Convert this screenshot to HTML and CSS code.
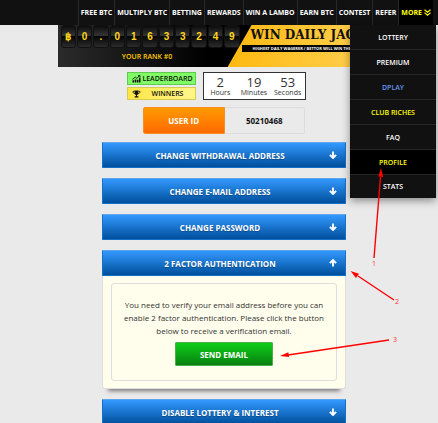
FILE: index.html
```html
<!DOCTYPE html>
<html lang="en">
<head>
<meta charset="utf-8">
<title>Profile</title>
<link rel="stylesheet" href="styles.css">
</head>
<body>
<svg class="defs" aria-hidden="true">
  <symbol id="arrow-down" viewBox="0 0 8 8"><path d="M4 .4V7M.9 3.8L4 7l3.1-3.2" fill="none" stroke="#fff" stroke-width="1.9"/></symbol>
  <symbol id="arrow-up" viewBox="0 0 8 8"><path d="M4 7.6V1M.9 4.2L4 1l3.1 3.2" fill="none" stroke="#fff" stroke-width="1.9"/></symbol>
</svg>
<header class="topbar">
  <nav class="nav">
    <a href="#">FREE BTC</a>
    <a href="#">MULTIPLY BTC</a>
    <a href="#">BETTING</a>
    <a href="#">REWARDS</a>
    <a href="#">WIN A LAMBO</a>
    <a href="#">EARN BTC</a>
    <a href="#">CONTEST</a>
    <a href="#">REFER</a>
    <a href="#" class="more">MORE
      <svg class="chevrons" viewBox="0 0 7 7" aria-hidden="true"><path d="M.5.8l3 2.5 3-2.5M.5 3.6l3 2.5 3-2.5" fill="none" stroke="#ff0" stroke-width="1.2"/></svg>
    </a>
  </nav>
  <nav class="menu">
    <a href="#">LOTTERY</a>
    <a href="#">PREMIUM</a>
    <a href="#" class="blue">DPLAY</a>
    <a href="#" class="yellow">CLUB RICHES</a>
    <a href="#">FAQ</a>
    <a href="#" class="yellow current">PROFILE</a>
    <a href="#">STATS</a>
  </nav>
</header>
<main class="page">
  <section class="banner">
    <div class="jackpot">
      <div class="digits"><span>฿</span><span>0</span><span>.</span><span>0</span><span>1</span><span>6</span><span>3</span><span>3</span><span>2</span><span>4</span><span>9</span></div>
      <div class="rank">YOUR RANK #0</div>
    </div>
    <div class="promo">
      <div class="promo-title">WIN DAILY JACKPOT</div>
      <div class="promo-sub">HIGHEST DAILY WAGERER / BETTOR WILL WIN THE JACKPOT</div>
    </div>
  </section>
  <section class="status">
    <div class="badges">
      <a href="#" class="badge green">
        <svg viewBox="0 0 9 8" aria-hidden="true"><path d="M.5 7.500V5.200h1.600v2.300zM2.700 7.500V4.400h1.600v3.100zM4.900 7.500V4.800h1.600v2.700zM7 7.500V2.800h1.500v4.700z"/><path d="M.4 4.300l3-2.200 1.400 1.200L7.600.8M6 .6h2v1.800" fill="none" stroke="#111" stroke-width=".9"/></svg>
        <span>LEADERBOARD</span></a>
      <a href="#" class="badge gold">
        <svg viewBox="0 0 9 8" aria-hidden="true"><path d="M2.600.5h3.800v2.300c0 1.300-.6 2-1.400 2.300v1.200h1.400v1.200H2.600V6.300H4V5.100c-.8-.3-1.400-1-1.400-2.300z"/><path d="M2.600 1.300H1c0 1.600.6 2.300 2 2.500M6.400 1.300H8c0 1.600-.6 2.300-2 2.500" fill="none" stroke="#111" stroke-width=".8"/></svg>
        <span>WINNERS</span></a>
    </div>
    <div class="countdown">
      <div><b>2</b><span>Hours</span></div>
      <div><b>19</b><span>Minutes</span></div>
      <div><b>53</b><span>Seconds</span></div>
    </div>
  </section>
  <section class="user"><div class="user-label">USER ID</div><div class="user-value">50210468</div></section>
  <section class="settings">
    <button class="bar" type="button"><span>CHANGE WITHDRAWAL ADDRESS</span><svg><use href="#arrow-down"/></svg></button>
    <button class="bar" type="button"><span>CHANGE E-MAIL ADDRESS</span><svg><use href="#arrow-down"/></svg></button>
    <button class="bar" type="button"><span>CHANGE PASSWORD</span><svg><use href="#arrow-down"/></svg></button>
    <div class="open">
      <button class="bar" type="button" aria-expanded="true"><span>2 FACTOR AUTHENTICATION</span><svg><use href="#arrow-up"/></svg></button>
      <div class="panel">
        <div class="box">
          <p>You need to verify your email address before you can<br>enable 2 factor authentication. Please click the button<br>below to receive a verification email.</p>
          <button class="send" type="button">SEND EMAIL</button>
        </div>
      </div>
    </div>
    <button class="bar" type="button"><span>DISABLE LOTTERY &amp; INTEREST</span><svg><use href="#arrow-down"/></svg></button>
  </section>
</main>
<svg class="notes" viewBox="0 0 438 423">
  <g stroke="#f00" stroke-width="1.4">
    <path d="M374 258L380.500 177"/>
    <path d="M394 300L358 276"/>
    <path d="M389 340L288 355"/>
  </g>
  <g fill="#f00">
    <path d="M381 168l2.300 9-5-.4z"/>
    <path d="M350.500 271l8.500 2.700-3 4.200z"/>
    <path d="M280 356l8.300-3.700.7 4.700z"/>
  </g>
  <g class="note-text">
    <text x="372" y="266">1</text>
    <text x="395" y="304">2</text>
    <text x="393" y="342">3</text>
  </g>
</svg>
</body>
</html>
```
FILE: styles.css
```css
* { box-sizing: border-box; }
body {
  margin: 0;
  height: 100vh;
  overflow: hidden;
  position: relative;
  background: #eaeaea;
  font-family: "Open Sans", "Noto Sans", sans-serif;
  font-size: 8px;
  color: #333;
}
a { text-decoration: none; color: inherit; }
button { font: inherit; border: 0; padding: 0; color: #fff; }
.defs { display: none; }

.topbar { position: relative; z-index: 2; background: #111; }
.nav { display: flex; justify-content: flex-end; padding-right: 5px; height: 25px; }
.nav a {
  display: flex;
  align-items: center;
  padding: 0 2px;
  border-left: 1px solid #292929;
  color: #fff;
  font-size: 7px;
  font-weight: 700;
  white-space: nowrap;
}
.nav .more { background: #000; color: #ff0; gap: 2px; }
.chevrons { width: 7px; height: 7px; }
.menu {
  position: absolute;
  top: 25px;
  right: 2px;
  width: 86px;
  background: #111;
  box-shadow: 0 3px 8px rgba(0, 0, 0, .4);
}
.menu a {
  display: flex;
  align-items: center;
  justify-content: center;
  height: 25px;
  border-bottom: 1px solid #262626;
  color: #fff;
  font-size: 7px;
  font-weight: 600;
}
.menu a:last-child { border-bottom: 0; height: 23px; }
.menu .blue { color: #6495ed; }
.menu .yellow { color: #ff0; }
.menu .current { background: #000; }

.page { width: 76%; margin: 0 auto; position: relative; z-index: 0; left: 5px; }
.banner { display: flex; height: 42px; background: linear-gradient(90deg, #2b2b2b, #000 45%); overflow: hidden; }
.jackpot { flex: 0 0 182px; padding-left: 3px; }
.digits { display: grid; grid-template-columns: repeat(11, 1fr); gap: 1px; }
.digits span {
  height: 23px;
  text-align: center;
  border: 1px solid #111;
  border-radius: 3px;
  background: linear-gradient(#0c0c0c, #343434 45%, #050505 50%, #2c2c2c);
  color: #ffd51c;
  font: 700 10px/22px "Liberation Sans", sans-serif;
}
.rank { color: #fc0; font-size: 7px; font-weight: 600; line-height: 18px; text-align: center; padding-right: 6px; }
.promo {
  flex: 1;
  min-width: 0;
  margin-left: -12px;
  padding-left: 14px;
  background: linear-gradient(90deg, #ffb910, #ffd35a);
  clip-path: polygon(24px 0, 100% 0, 100% 100%, 0 100%);
  white-space: nowrap;
}
.promo-title { padding-left: 9px; color: #111; font: 700 12px/20px "DejaVu Serif", serif; }
.promo-sub { height: 7px; padding-left: 11px; background: #000; color: #fff; font-size: 4px; font-weight: 700; line-height: 7px; }

.status { display: flex; justify-content: center; gap: 7px; padding: 5px 16px 0 0; }
.badges { display: flex; flex-direction: column; gap: 2px; width: 69px; }
.badge {
  display: flex;
  align-items: center;
  height: 13px;
  padding-left: 4px;
  border: 1px solid #62c950;
  background: #80fc65;
  color: #111;
  font-size: 7px;
  font-weight: 600;
}
.badge svg { width: 9px; height: 8px; fill: #111; }
.badge span { flex: 1; text-align: center; }
.badge.gold { border-color: #d8cc50; background: linear-gradient(90deg, #ffe646, #fff68a); }
.countdown {
  display: grid;
  grid-template-columns: repeat(3, 1fr);
  width: 103px;
  height: 28px;
  border: 1px solid #333;
  background: #fff;
  text-align: center;
}
.countdown b { display: block; font-size: 13px; font-weight: 400; line-height: 16px; padding-top: 1px; }
.countdown span { display: block; font-size: 7px; line-height: 5px; }

.user { display: flex; width: 162px; height: 27px; margin: 7px auto 0; font-weight: 700; line-height: 25px; text-align: center; }
.user-label { flex: 1; background: linear-gradient(#ff9a00, #ff6a00); border: 1px solid #f78e1e; border-radius: 2px 0 0 2px; color: #fff; }
.user-value { flex: 1; border: 1px solid #ddd; border-left: 0; border-radius: 0 2px 2px 0; color: #111; }

.settings { display: flex; flex-direction: column; gap: 10px; width: 244px; margin: 8px auto 0; }
.bar {
  display: flex;
  align-items: center;
  width: 100%;
  height: 26px;
  padding: 0 8px;
  border: 1px solid #1470c8;
  border-top-color: #5aa5ee;
  border-radius: 1px;
  background: linear-gradient(#3399ff, #004f9c);
  font-weight: 700;
  text-shadow: 0 1px 1px rgba(0, 0, 0, .3);
}
.bar span { flex: 1; text-align: center; }
.bar svg { width: 8px; height: 8px; }
.open { position: relative; }
.open::after {
  content: "";
  position: absolute;
  z-index: -1;
  left: 6px;
  right: 6px;
  bottom: 1px;
  height: 6px;
  box-shadow: 0 3px 4px rgba(0, 0, 0, .5);
}
.panel { padding: 7px 8px; border: 1px solid #ddd; border-top: 0; border-radius: 0 0 3px 3px; background: #fffdec; }
.box { padding: 14px 0; border: 1px solid #ddd; border-radius: 3px; text-align: center; }
.box p { margin: 0 0 5px; line-height: 13px; white-space: nowrap; }
.send {
  width: 98px;
  height: 24px;
  border: 1px solid #4cae4c;
  border-radius: 1px;
  background: linear-gradient(#0fce1a, #088010);
  font-weight: 700;
}

.notes { position: absolute; z-index: 3; top: 0; left: 0; width: 438px; height: 423px; pointer-events: none; }
.note-text { fill: #ff3030; font-size: 7px; }
```
